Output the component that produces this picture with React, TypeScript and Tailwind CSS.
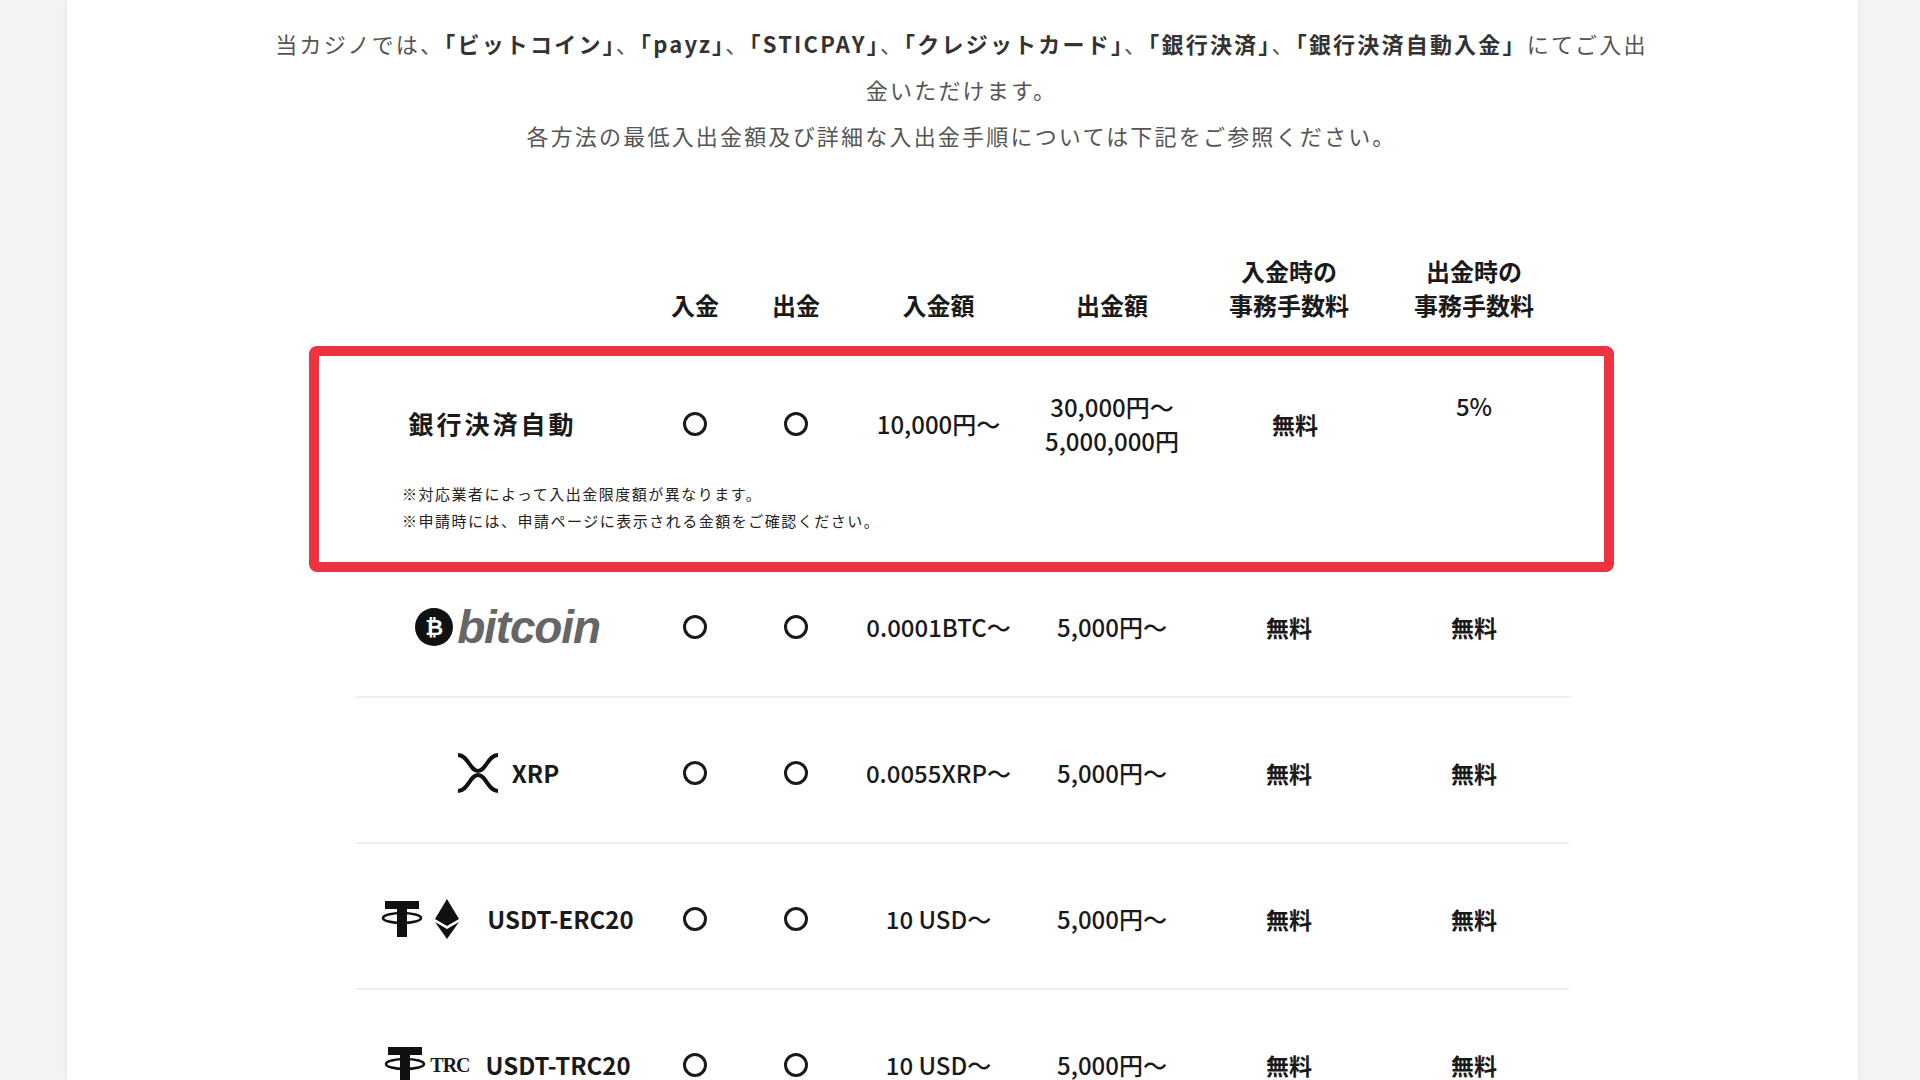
const font = { fontFamily: '"Noto Sans CJK JP", "Noto Sans", sans-serif' };

function Circle() {
  return <span className="inline-block w-[24px] h-[24px] rounded-full border-[3px] border-[#1a1a1a]" />;
}

function Tether() {
  return (
    <svg width="42" height="40" viewBox="0 0 42 40">
      <rect x="4" y="2" width="34" height="8" fill="#111" />
      <rect x="16" y="2" width="10" height="36" fill="#111" />
      <ellipse cx="21" cy="19" rx="19" ry="5" fill="none" stroke="#111" strokeWidth="2.5" />
    </svg>
  );
}

function Eth() {
  return (
    <svg width="24" height="40" viewBox="0 0 24 40">
      <path d="M12 0 L24 20 L12 27 L0 20 Z" fill="#111" />
      <path d="M12 30 L24 23 L12 40 L0 23 Z" fill="#111" />
    </svg>
  );
}

function Xrp() {
  return (
    <svg width="44" height="40" viewBox="0 0 44 40">
      <path d="M2 2 C12 2 14 18 22 18 C30 18 32 2 42 2" fill="none" stroke="#111" strokeWidth="4" />
      <path d="M2 38 C12 38 14 22 22 22 C30 22 32 38 42 38" fill="none" stroke="#111" strokeWidth="4" />
    </svg>
  );
}

const cols = "grid grid-cols-[305px_100px_102px_183px_164px_190px_180px] items-center text-center text-[24px] font-medium text-[#1a1a1a]";

type Row = { name: React.ReactNode; inAmt: string; outAmt: string; fee1: string; fee2: string };

const rows: Row[] = [
  {
    name: (
      <div className="flex items-center justify-center gap-1 pl-[30px]">
        <span className="w-[38px] h-[38px] rounded-full bg-[#111] text-white text-[22px] font-bold flex items-center justify-center" style={{ fontFamily: '"Liberation Sans", sans-serif' }}>₿</span>
        <span className="italic font-bold text-[46px] text-[#666] leading-none tracking-tight" style={{ fontFamily: '"Liberation Sans", sans-serif' }}>bitcoin</span>
      </div>
    ),
    inAmt: "0.0001BTC〜",
    outAmt: "5,000円〜",
    fee1: "無料",
    fee2: "無料",
  },
  {
    name: (
      <div className="flex items-center justify-center gap-3 pl-[30px]">
        <Xrp />
        <span className="font-bold text-[24px]">XRP</span>
      </div>
    ),
    inAmt: "0.0055XRP〜",
    outAmt: "5,000円〜",
    fee1: "無料",
    fee2: "無料",
  },
  {
    name: (
      <div className="flex items-center justify-center gap-3 pl-[30px]">
        <Tether />
        <Eth />
        <span className="font-bold text-[24px] ml-4">USDT-ERC20</span>
      </div>
    ),
    inAmt: "10 USD〜",
    outAmt: "5,000円〜",
    fee1: "無料",
    fee2: "無料",
  },
  {
    name: (
      <div className="flex items-center justify-center gap-1 pl-[30px]">
        <Tether />
        <span className="font-black text-[20px] tracking-tighter" style={{ fontFamily: '"Liberation Serif", serif' }}>TRC</span>
        <span className="font-bold text-[24px] ml-3">USDT-TRC20</span>
      </div>
    ),
    inAmt: "10 USD〜",
    outAmt: "5,000円〜",
    fee1: "無料",
    fee2: "無料",
  },
];

export default function App() {
  return (
    <div className="w-[1920px] h-[1080px] overflow-hidden bg-[#f3f3f3]" style={font}>
      <div className="ml-[67px] w-[1791px] h-full bg-white shadow-[0_0_6px_rgba(0,0,0,0.06)] pl-[242px]">
        <div className="w-[1305px] text-center text-[22px] tracking-[0.1em] text-[#555] leading-[46px] pt-[20px]">
          <p className="-mx-[60px]">
            当カジノでは、<b className="text-[#333]">「ビットコイン」</b>、<b className="text-[#333]">「payz」</b>、<b className="text-[#333]">「STICPAY」</b>、<b className="text-[#333]">「クレジットカード」</b>、<b className="text-[#333]">「銀行決済」</b>、<b className="text-[#333]">「銀行決済自動入金」</b>にてご入出
            <br />金いただけます。
          </p>
          <p>各方法の最低入出金額及び詳細な入出金手順については下記をご参照ください。</p>
        </div>

        <div className={`${cols} ml-[31px] mt-[96px] !font-bold leading-[34px] items-end`}>
          <div />
          <div>入金</div>
          <div>出金</div>
          <div>入金額</div>
          <div>出金額</div>
          <div>入金時の<br />事務手数料</div>
          <div>出金時の<br />事務手数料</div>
        </div>

        <div className="mt-[24px] w-[1305px] h-[226px] border-[10px] border-[#ee3340] rounded-[8px] pl-[21px] pt-[34px]">
          <div className={`${cols} h-[56px]`}>
            <div className="font-bold tracking-[0.12em] text-[25px]">銀行決済自動</div>
            <div className="flex justify-center"><Circle /></div>
            <div className="flex justify-center"><Circle /></div>
            <div>10,000円〜</div>
            <div className="leading-[34px]">30,000円〜<br />5,000,000円</div>
            <div className="font-bold text-[23px] ml-[12px]">無料</div>
            <div className="self-start -mt-[2px]">5%</div>
          </div>
          <div className="mt-[34px] ml-[62px] text-[15px] leading-[27px] text-[#222] tracking-[0.1em]">
            <p>※対応業者によって入出金限度額が異なります。</p>
            <p>※申請時には、申請ページに表示される金額をご確認ください。</p>
          </div>
        </div>

        <div className="w-[1305px] -mt-[20px]">
          {rows.map((r, i) => (
            <div key={i} className="ml-[46px] mr-[44px] h-[146px] border-b-2 border-[#f0f0f0] flex items-center">
              <div className={`${cols} -ml-[15px] pt-[6px]`}>
                <div>{r.name}</div>
                <div className="flex justify-center"><Circle /></div>
                <div className="flex justify-center"><Circle /></div>
                <div>{r.inAmt}</div>
                <div>{r.outAmt}</div>
                <div className="font-bold text-[23px]">{r.fee1}</div>
                <div className="font-bold text-[23px]">{r.fee2}</div>
              </div>
            </div>
          ))}
        </div>
      </div>
    </div>
  );
}
